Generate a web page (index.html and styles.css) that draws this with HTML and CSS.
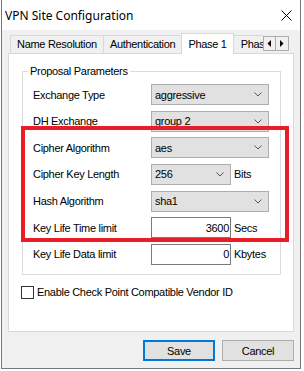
FILE: index.html
```html
<!DOCTYPE html>
<html lang="en">
  <head>
    <meta charset="UTF-8" />
    <meta name="viewport" content="width=device-width, initial-scale=1.0" />
    <title>VPN Site Configuration</title>
    <link rel="stylesheet" href="styles.css">
  </head>
  <body>
    <div class="window">
      <div class="titlebar">
        <span class="title">VPN Site Configuration</span>
        <svg class="close" width="11" height="11" viewBox="0 0 11 11">
          <path d="M0.5 0.5 L10.5 10.5 M10.5 0.5 L0.5 10.5" stroke="#000" stroke-width="1" fill="none" />
        </svg>
      </div>

      <div class="client">
        <div class="tabs">
          <div class="tab">Name Resolution</div>
          <div class="tab">Authentication</div>
          <div class="tab active">Phase 1</div>
          <div class="tab clipped">Phase 2</div>
          <div class="tab-scroll">
            <span class="arrow">
              <svg width="4" height="7" viewBox="0 0 4 7"><path d="M4 0 L0.5 3.5 L4 7 Z" fill="#000" /></svg>
            </span>
            <span class="arrow">
              <svg width="4" height="7" viewBox="0 0 4 7"><path d="M0 0 L3.5 3.5 L0 7 Z" fill="#000" /></svg>
            </span>
          </div>
        </div>

        <div class="panel">
          <fieldset class="group">
            <legend>Proposal Parameters</legend>
            <div class="row">
              <span class="label">Exchange Type</span>
              <div class="combo">aggressive<svg class="chev" width="8" height="5" viewBox="0 0 8 5"><path d="M0.5 0.5 L4 4 L7.5 0.5" stroke="#555" fill="none" /></svg></div>
            </div>
            <div class="row">
              <span class="label">DH Exchange</span>
              <div class="combo">group 2<svg class="chev" width="8" height="5" viewBox="0 0 8 5"><path d="M0.5 0.5 L4 4 L7.5 0.5" stroke="#555" fill="none" /></svg></div>
            </div>
            <div class="row">
              <span class="label">Cipher Algorithm</span>
              <div class="combo">aes<svg class="chev" width="8" height="5" viewBox="0 0 8 5"><path d="M0.5 0.5 L4 4 L7.5 0.5" stroke="#555" fill="none" /></svg></div>
            </div>
            <div class="row">
              <span class="label">Cipher Key Length</span>
              <div class="combo short">256<svg class="chev" width="8" height="5" viewBox="0 0 8 5"><path d="M0.5 0.5 L4 4 L7.5 0.5" stroke="#555" fill="none" /></svg></div>
              <span class="unit">Bits</span>
            </div>
            <div class="row">
              <span class="label">Hash Algorithm</span>
              <div class="combo">sha1<svg class="chev" width="8" height="5" viewBox="0 0 8 5"><path d="M0.5 0.5 L4 4 L7.5 0.5" stroke="#555" fill="none" /></svg></div>
            </div>
            <div class="row">
              <span class="label">Key Life Time limit</span>
              <div class="edit">3600</div>
              <span class="unit">Secs</span>
            </div>
            <div class="row">
              <span class="label">Key Life Data limit</span>
              <div class="edit">0</div>
              <span class="unit">Kbytes</span>
            </div>
          </fieldset>

          <div class="check">
            <span class="box"></span>
            <span>Enable Check Point Compatible Vendor ID</span>
          </div>
        </div>

        <div class="buttons">
          <button class="btn default">Save</button>
          <button class="btn">Cancel</button>
        </div>
      </div>

      <div class="highlight"></div>
    </div>
  </body>
</html>
```

FILE: styles.css
```css
body {
  margin: 0;
  background: #fff;
  font-family: "Liberation Sans", Arial, sans-serif;
  font-size: 11px;
  letter-spacing: -0.3px;
  color: #000;
}
.window {
  position: relative;
  box-sizing: border-box;
  margin-left: 1px;
  width: 300px;
  height: 369px;
  border: 1px solid #777;
  border-top: none;
  background: #f0f0f0;
  display: flex;
  flex-direction: column;
}
.titlebar {
  height: 30px;
  background: #fff;
  display: flex;
  align-items: center;
  padding-left: 3px;
}
.title {
  font-family: "Noto Sans", sans-serif;
  font-size: 12px;
  letter-spacing: 0;
}
.close {
  margin-left: auto;
  margin-right: 8px;
}
.client {
  flex: 1;
  padding: 3px 6px 0 6px;
}
.tabs {
  position: relative;
  z-index: 1;
  display: flex;
  align-items: flex-end;
  height: 21px;
  margin-bottom: -1px;
  padding-left: 2px;
}
.tab {
  height: 18px;
  margin-bottom: 1px;
  box-sizing: border-box;
  padding: 2px 6px 0 6px;
  border: 1px solid #d9d9d9;
  border-bottom: none;
  border-right: none;
  background: #f0f0f0;
  white-space: nowrap;
}
.tab.active {
  height: 21px;
  margin-bottom: 0;
  padding-top: 4px;
  background: #fff;
  border-right: 1px solid #d9d9d9;
}
.tab.active + .tab {
  border-left: none;
}
.tab.clipped {
  flex: none;
  width: 29px;
  overflow: hidden;
  padding-left: 7px;
}
.tab-scroll {
  align-self: flex-start;
  margin-top: 3px;
  display: flex;
}
.arrow {
  box-sizing: border-box;
  width: 13px;
  height: 15px;
  border: 1px solid #adadad;
  background: #f0f0f0;
  display: flex;
  align-items: center;
  justify-content: center;
}
.arrow + .arrow {
  border-left: none;
}
.panel {
  box-sizing: border-box;
  height: 279px;
  background: #fff;
  border: 1px solid #d9d9d9;
  padding-top: 10px;
}
.group {
  margin: 0 12px 0 13px;
  padding: 6px 10px 9px 10px;
  border: 1px solid #dcdcdc;
  display: flex;
  flex-direction: column;
  row-gap: 5.67px;
}
.group legend {
  margin-left: -5px;
  padding: 0 2px;
  line-height: 14px;
}
.row {
  display: flex;
  align-items: center;
  height: 21px;
}
.label {
  width: 118px;
}
.combo {
  box-sizing: border-box;
  width: 118px;
  height: 21px;
  padding-left: 3px;
  background: #e1e1e1;
  border: 1px solid #adadad;
  display: flex;
  align-items: center;
}
.combo.short {
  width: 80px;
}
.chev {
  margin-left: auto;
  margin-right: 6px;
}
.edit {
  box-sizing: border-box;
  width: 80px;
  height: 21px;
  padding-right: 1px;
  background: #fff;
  border: 1px solid #7a7a7a;
  display: flex;
  align-items: center;
  justify-content: flex-end;
}
.unit {
  margin-left: 3px;
}
.check {
  display: flex;
  align-items: center;
  margin: 11px 0 0 12px;
}
.check .box {
  box-sizing: border-box;
  width: 13px;
  height: 13px;
  border: 1px solid #333;
  background: #fff;
  margin-right: 3px;
}
.buttons {
  display: flex;
  justify-content: flex-end;
  gap: 7px;
  margin-top: 8px;
}
.btn {
  box-sizing: border-box;
  width: 72px;
  height: 21px;
  padding: 0;
  font-family: inherit;
  font-size: 11px;
  letter-spacing: inherit;
  color: #000;
  background: #e1e1e1;
  border: 1px solid #adadad;
}
.btn.default {
  border: 2px solid #0078d7;
}
.highlight {
  position: absolute;
  left: 19px;
  top: 126px;
  box-sizing: border-box;
  width: 268px;
  height: 116px;
  border: 4px solid #ec1c24;
}
```
